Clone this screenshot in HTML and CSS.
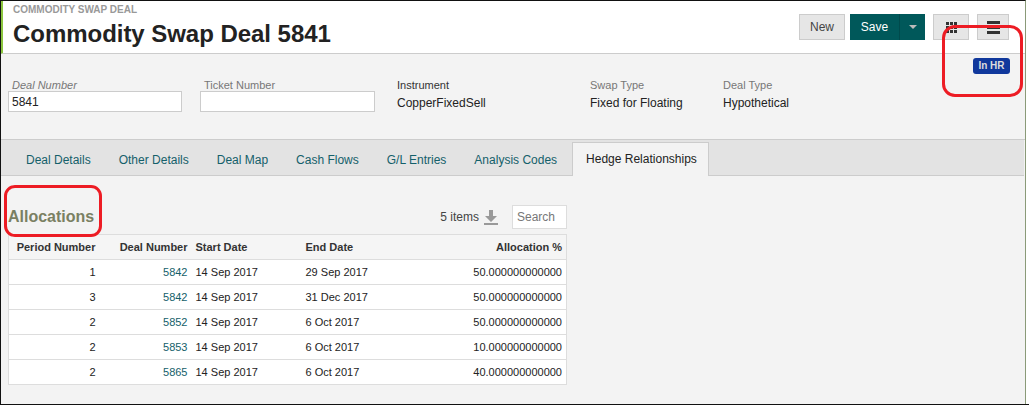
FILE: index.html
```html
<!DOCTYPE html>
<html lang="en">
<head>
    <meta charset="UTF-8">
    <title>Commodity Swap Deal 5841</title>
    <link rel="stylesheet" href="styles.css">
</head>
<body>
    <div class="shot">
    <div class="page">
        <header class="page-header">
            <div class="titles">
                <div class="eyebrow">COMMODITY SWAP DEAL</div>
                <h1>Commodity Swap Deal 5841</h1>
            </div>
            <div class="actions">
                <button class="btn btn-new">New</button>
                <div class="split">
                    <button class="btn-save">Save</button>
                    <button class="btn-caret"><span class="caret"></span></button>
                </div>
                <button class="btn btn-icon btn-grid">
                    <svg width="11" height="11" viewBox="0 0 11 11"><path d="M0 0h3v3H0zM4 0h3v3H4zM8 0h3v3H8zM0 4h3v3H0zM4 4h3v3H4zM8 4h3v3H8zM0 8h3v3H0zM4 8h3v3H4zM8 8h3v3H8z" fill="#333"/></svg>
                </button>
                <button class="btn btn-icon btn-menu">
                    <svg width="13" height="13" viewBox="0 0 13 13"><path d="M0 0h13v3H0zM0 5h13v3H0zM0 10h13v3H0z" fill="#333"/></svg>
                </button>
            </div>
        </header>

        <section class="summary">
            <div class="badge-row"><span class="badge">In HR</span></div>
            <div class="fields">
                <div class="field field-input">
                    <label class="italic">Deal Number</label>
                    <input type="text" value="5841">
                </div>
                <div class="field field-input ticket">
                    <label>Ticket Number</label>
                    <input type="text">
                </div>
                <div class="field instrument">
                    <span class="label-dark">Instrument</span>
                    <span class="value">CopperFixedSell</span>
                </div>
                <div class="field swap">
                    <span class="label">Swap Type</span>
                    <span class="value">Fixed for Floating</span>
                </div>
                <div class="field">
                    <span class="label">Deal Type</span>
                    <span class="value">Hypothetical</span>
                </div>
            </div>
        </section>

        <nav class="tabs">
            <a>Deal Details</a>
            <a>Other Details</a>
            <a>Deal Map</a>
            <a>Cash Flows</a>
            <a>G/L Entries</a>
            <a>Analysis Codes</a>
            <a class="active">Hedge Relationships</a>
        </nav>

        <main class="content">
            <div class="panel">
                <div class="panel-head">
                    <h2>Allocations</h2>
                    <div class="tools">
                        <span class="count">5 items</span>
                        <svg class="download" width="14" height="15" viewBox="0 0 14 15"><path d="M5 0h4v6h4l-6 6-6-6h4zM0 13h14v2H0z" fill="#999"/></svg>
                        <input class="search" type="text" placeholder="Search">
                    </div>
                </div>
                <table>
                    <thead>
                        <tr>
                            <th class="num c-period">Period Number</th>
                            <th class="num c-deal">Deal Number</th>
                            <th class="c-start">Start Date</th>
                            <th class="c-end">End Date</th>
                            <th class="num">Allocation %</th>
                        </tr>
                    </thead>
                    <tbody>
                        <tr><td class="num">1</td><td class="num"><a>5842</a></td><td>14 Sep 2017</td><td>29 Sep 2017</td><td class="num">50.000000000000</td></tr>
                        <tr><td class="num">3</td><td class="num"><a>5842</a></td><td>14 Sep 2017</td><td>31 Dec 2017</td><td class="num">50.000000000000</td></tr>
                        <tr><td class="num">2</td><td class="num"><a>5852</a></td><td>14 Sep 2017</td><td>6 Oct 2017</td><td class="num">50.000000000000</td></tr>
                        <tr><td class="num">2</td><td class="num"><a>5853</a></td><td>14 Sep 2017</td><td>6 Oct 2017</td><td class="num">10.000000000000</td></tr>
                        <tr><td class="num">2</td><td class="num"><a>5865</a></td><td>14 Sep 2017</td><td>6 Oct 2017</td><td class="num">40.000000000000</td></tr>
                    </tbody>
                </table>
            </div>
        </main>

        <!-- red markup drawn over the screenshot -->
        <div class="markup markup-badge"></div>
        <div class="markup markup-title"></div>
    </div>
    </div>
</body>
</html>
```

FILE: styles.css
```css
* {
    box-sizing: border-box;
}
html, body {
    margin: 0;
    padding: 0;
}
body {
    font-family: "Liberation Sans", Arial, sans-serif;
    font-size: 12px;
    color: #222;
    background: #fff;
}
.shot {
    width: 1029px;
    height: 405px;
    overflow: hidden;
    border-bottom: 1px solid #111;
}
.page {
    position: relative;
    width: 1026px;
    height: 404px;
    overflow: hidden;
    background: #f3f3f3;
    border-top: 1px solid #111;
    border-left: 1px solid #111;
    border-right: 1px solid #8a9a78;
}
.page-header {
    height: 53px;
    margin-left: -1px;
    padding: 2px 16px 0 10px;
    display: flex;
    justify-content: space-between;
    background: #fff;
    border-left: 3px solid #8cc63f;
    border-bottom: 1px solid #ccc;
}
.eyebrow {
    font-size: 10px;
    font-weight: bold;
    color: #999;
    line-height: 13px;
}
h1 {
    margin: 4px 0 0;
    font-size: 24px;
    line-height: 28px;
    font-weight: bold;
    color: #222;
    letter-spacing: -0.04px;
}
.actions {
    display: flex;
    align-items: flex-start;
    gap: 8px;
    padding-top: 11px;
}
.btn {
    height: 26px;
    padding: 0;
    font: 12px "Liberation Sans", Arial, sans-serif;
    color: #444;
    background: #e6e6e6;
    border: 1px solid #ccc;
}
.btn-new {
    width: 46px;
    margin-right: -3px;
}
.btn-icon {
    display: flex;
    align-items: center;
    justify-content: center;
}
.btn-grid {
    width: 36px;
}
.btn-menu {
    width: 32px;
}
.split {
    display: flex;
    height: 26px;
    background: #00585a;
}
.btn-save {
    width: 50px;
    padding: 0;
    border: 0;
    background: none;
    color: #fff;
    font: 12px "Liberation Sans", Arial, sans-serif;
    border-right: 1px solid #004a4c;
}
.btn-caret {
    width: 25px;
    padding: 0;
    border: 0;
    background: none;
    display: flex;
    align-items: center;
    justify-content: center;
}
.caret {
    border-top: 4px solid #bbb;
    border-left: 4px solid transparent;
    border-right: 4px solid transparent;
}
.summary {
    height: 86px;
    border-bottom: 1px solid #ccc;
    padding: 4px 0 0 7px;
}
.badge-row {
    height: 16px;
    display: flex;
    justify-content: flex-end;
    padding-right: 15px;
}
.badge {
    width: 37px;
    height: 16px;
    line-height: 16px;
    text-align: center;
    font-size: 10px;
    font-weight: bold;
    color: #ddd;
    background: #10389c;
    border-radius: 3px;
}
.fields {
    display: flex;
    margin-top: 4px;
}
.field {
    display: flex;
    flex-direction: column;
}
.field label, .label, .label-dark {
    font-size: 11px;
    line-height: 14px;
    color: #777;
}
.field label {
    padding-left: 4px;
}
.italic {
    font-style: italic;
}
.label-dark {
    color: #333;
}
.field-input {
    width: 174px;
    margin-right: 18px;
}
.field-input input {
    width: 174px;
    height: 21px;
    margin-top: -1px;
    padding: 0 3px;
    font: 12px "Liberation Sans", Arial, sans-serif;
    color: #222;
    background: #fff;
    border: 1px solid #ccc;
    outline: none;
}
.ticket {
    width: 175px;
    margin-right: 22px;
}
.ticket input {
    width: 175px;
}
.value {
    margin-top: 4px;
    line-height: 14px;
    color: #222;
}
.instrument {
    width: 193px;
}
.swap {
    width: 133px;
}
.tabs {
    height: 36px;
    margin-right: 1px;
    display: flex;
    align-items: flex-end;
    padding-left: 11px;
    background: #e3e3e3;
    border-bottom: 1px solid #ccc;
}
.tabs a {
    height: 33px;
    margin-bottom: -1px;
    padding: 0 13px;
    line-height: 33px;
    color: #14606a;
    border: 1px solid transparent;
    border-bottom: 0;
}
.tabs a.active {
    height: 34px;
    margin-left: 1px;
    padding-right: 11px;
    color: #222;
    background: #f3f3f3;
    border-color: #ccc;
}
.content {
    padding: 0 0 0 7px;
}
.panel {
    width: 559px;
}
.panel-head {
    height: 58px;
    display: flex;
    justify-content: space-between;
    align-items: flex-end;
}
h2 {
    margin: 0 0 7px;
    font-size: 16px;
    line-height: 20px;
    font-weight: bold;
    color: #7a8062;
}
.tools {
    display: flex;
    align-items: center;
    padding-bottom: 5px;
}
.count {
    color: #444;
}
.download {
    margin: 0 0 0 5px;
}
.search {
    width: 55px;
    height: 24px;
    margin-left: 14px;
    padding: 0 4px;
    font: 12px "Liberation Sans", Arial, sans-serif;
    background: #fff;
    border: 1px solid #ddd;
    outline: none;
}
.search::placeholder {
    color: #777;
}
table {
    width: 559px;
    border-collapse: collapse;
    table-layout: fixed;
    background: #fff;
    border: 1px solid #ddd;
    font-size: 11px;
}
th, td {
    height: 25px;
    padding: 0 4px;
    text-align: left;
    border-bottom: 1px solid #ddd;
}
th {
    font-size: 11px;
    color: #333;
    background: #f5f5f5;
}
.num {
    text-align: right;
}
.c-period {
    width: 91px;
}
.c-deal {
    width: 92px;
}
.c-start {
    width: 110px;
}
.c-end {
    width: 110px;
}
td a {
    color: #14606a;
}
.markup {
    position: absolute;
    border: 3px solid #ed1c24;
    border-radius: 13px;
}
.markup-badge {
    left: 941px;
    top: 24px;
    width: 81px;
    height: 72px;
}
.markup-title {
    left: 3px;
    top: 184px;
    width: 98px;
    height: 52px;
    border-radius: 11px;
}
```
